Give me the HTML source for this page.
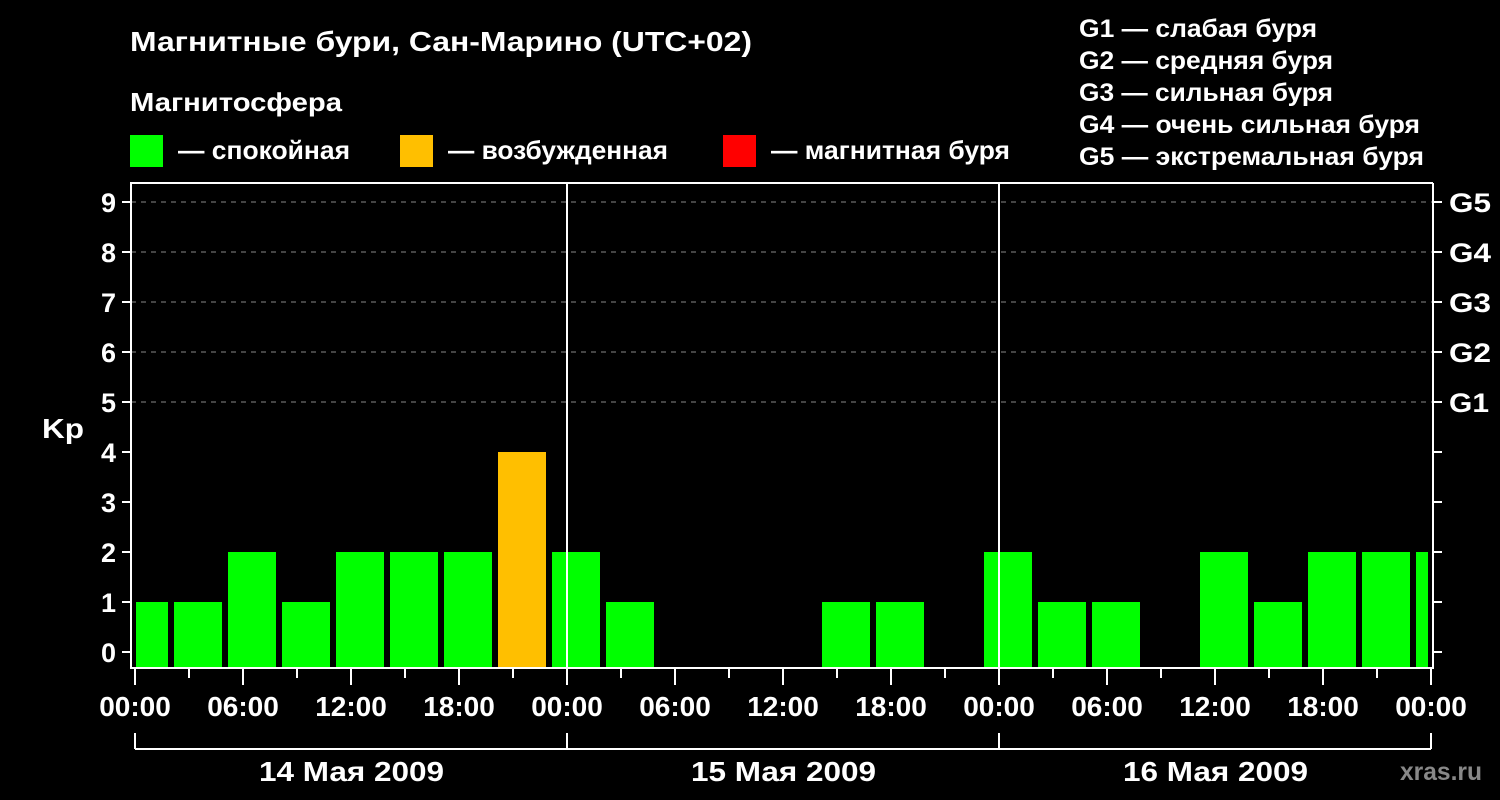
<!DOCTYPE html>
<html><head><meta charset="utf-8"><style>
html,body{margin:0;padding:0;background:#000;width:1500px;height:800px;overflow:hidden}
svg{display:block}
text{font-family:"Liberation Sans",sans-serif;font-weight:bold;fill:#fff}
</style></head><body>
<svg width="1500" height="800" viewBox="0 0 1500 800" xmlns="http://www.w3.org/2000/svg">
<text x="130" y="51" font-size="28" textLength="622" lengthAdjust="spacingAndGlyphs">Магнитные бури, Сан-Марино (UTC+02)</text>
<text x="130" y="111" font-size="26" textLength="212" lengthAdjust="spacingAndGlyphs">Магнитосфера</text>
<rect x="130" y="135" width="33" height="32" fill="#00ff00"/>
<text x="178" y="159" font-size="26" textLength="172" lengthAdjust="spacingAndGlyphs">— спокойная</text>
<rect x="400" y="135" width="33" height="32" fill="#ffbf00"/>
<text x="448" y="159" font-size="26" textLength="220" lengthAdjust="spacingAndGlyphs">— возбужденная</text>
<rect x="723" y="135" width="33" height="32" fill="#ff0000"/>
<text x="771" y="159" font-size="26" textLength="239" lengthAdjust="spacingAndGlyphs">— магнитная буря</text>
<g font-size="25" lengthAdjust="spacingAndGlyphs">
<text x="1079" y="37" textLength="238" lengthAdjust="spacingAndGlyphs">G1 — слабая буря</text>
<text x="1079" y="69" textLength="254" lengthAdjust="spacingAndGlyphs">G2 — средняя буря</text>
<text x="1079" y="101" textLength="254" lengthAdjust="spacingAndGlyphs">G3 — сильная буря</text>
<text x="1079" y="133" textLength="341" lengthAdjust="spacingAndGlyphs">G4 — очень сильная буря</text>
<text x="1079" y="165" textLength="345" lengthAdjust="spacingAndGlyphs">G5 — экстремальная буря</text>
</g>
<g stroke="#888" stroke-width="1" stroke-dasharray="5,5">
<line x1="131" y1="202" x2="1433" y2="202"/>
<line x1="131" y1="252" x2="1433" y2="252"/>
<line x1="131" y1="302" x2="1433" y2="302"/>
<line x1="131" y1="352" x2="1433" y2="352"/>
<line x1="131" y1="402" x2="1433" y2="402"/>
</g>
<g fill="#00ff00">
<rect x="136" y="602" width="32" height="66"/>
<rect x="174" y="602" width="48" height="66"/>
<rect x="228" y="552" width="48" height="116"/>
<rect x="282" y="602" width="48" height="66"/>
<rect x="336" y="552" width="48" height="116"/>
<rect x="390" y="552" width="48" height="116"/>
<rect x="444" y="552" width="48" height="116"/>
<rect x="552" y="552" width="48" height="116"/>
<rect x="606" y="602" width="48" height="66"/>
<rect x="822" y="602" width="48" height="66"/>
<rect x="876" y="602" width="48" height="66"/>
<rect x="984" y="552" width="48" height="116"/>
<rect x="1038" y="602" width="48" height="66"/>
<rect x="1092" y="602" width="48" height="66"/>
<rect x="1200" y="552" width="48" height="116"/>
<rect x="1254" y="602" width="48" height="66"/>
<rect x="1308" y="552" width="48" height="116"/>
<rect x="1362" y="552" width="48" height="116"/>
<rect x="1416" y="552" width="12" height="116"/>
</g>
<rect x="498" y="452" width="48" height="216" fill="#ffbf00"/>
<g stroke="#fff" stroke-width="2" fill="none">
<polyline points="1433,183 131,183 131,668 1433,668 1433,183"/>
<line x1="567" y1="183" x2="567" y2="668"/>
<line x1="999" y1="183" x2="999" y2="668"/>
<line x1="135" y1="749" x2="1431" y2="749"/>
<line x1="135" y1="733" x2="135" y2="749"/>
<line x1="567" y1="733" x2="567" y2="749"/>
<line x1="999" y1="733" x2="999" y2="749"/>
<line x1="1431" y1="733" x2="1431" y2="749"/>
</g>
<g stroke="#fff" stroke-width="2">
<line x1="122" y1="652" x2="131" y2="652"/><line x1="122" y1="602" x2="131" y2="602"/>
<line x1="122" y1="552" x2="131" y2="552"/><line x1="122" y1="502" x2="131" y2="502"/>
<line x1="122" y1="452" x2="131" y2="452"/><line x1="122" y1="402" x2="131" y2="402"/>
<line x1="122" y1="352" x2="131" y2="352"/><line x1="122" y1="302" x2="131" y2="302"/>
<line x1="122" y1="252" x2="131" y2="252"/><line x1="122" y1="202" x2="131" y2="202"/>
<line x1="1433" y1="652" x2="1442" y2="652"/><line x1="1433" y1="602" x2="1442" y2="602"/>
<line x1="1433" y1="552" x2="1442" y2="552"/><line x1="1433" y1="502" x2="1442" y2="502"/>
<line x1="1433" y1="452" x2="1442" y2="452"/><line x1="1433" y1="402" x2="1442" y2="402"/>
<line x1="1433" y1="352" x2="1442" y2="352"/><line x1="1433" y1="302" x2="1442" y2="302"/>
<line x1="1433" y1="252" x2="1442" y2="252"/><line x1="1433" y1="202" x2="1442" y2="202"/>
<line x1="135" y1="668" x2="135" y2="685"/><line x1="189" y1="668" x2="189" y2="678"/>
<line x1="243" y1="668" x2="243" y2="685"/><line x1="297" y1="668" x2="297" y2="678"/>
<line x1="351" y1="668" x2="351" y2="685"/><line x1="405" y1="668" x2="405" y2="678"/>
<line x1="459" y1="668" x2="459" y2="685"/><line x1="513" y1="668" x2="513" y2="678"/>
<line x1="567" y1="668" x2="567" y2="685"/><line x1="621" y1="668" x2="621" y2="678"/>
<line x1="675" y1="668" x2="675" y2="685"/><line x1="729" y1="668" x2="729" y2="678"/>
<line x1="783" y1="668" x2="783" y2="685"/><line x1="837" y1="668" x2="837" y2="678"/>
<line x1="891" y1="668" x2="891" y2="685"/><line x1="945" y1="668" x2="945" y2="678"/>
<line x1="999" y1="668" x2="999" y2="685"/><line x1="1053" y1="668" x2="1053" y2="678"/>
<line x1="1107" y1="668" x2="1107" y2="685"/><line x1="1161" y1="668" x2="1161" y2="678"/>
<line x1="1215" y1="668" x2="1215" y2="685"/><line x1="1269" y1="668" x2="1269" y2="678"/>
<line x1="1323" y1="668" x2="1323" y2="685"/><line x1="1377" y1="668" x2="1377" y2="678"/>
<line x1="1431" y1="668" x2="1431" y2="685"/>
</g>
<g font-size="27" text-anchor="end">
<text x="116" y="662">0</text><text x="116" y="612">1</text><text x="116" y="562">2</text>
<text x="116" y="512">3</text><text x="116" y="462">4</text><text x="116" y="412">5</text>
<text x="116" y="362">6</text><text x="116" y="312">7</text><text x="116" y="262">8</text>
<text x="116" y="212">9</text>
</g>
<text x="42" y="438" font-size="28" textLength="42" lengthAdjust="spacingAndGlyphs">Kp</text>
<g font-size="27">
<text x="1449" y="412" textLength="40" lengthAdjust="spacingAndGlyphs">G1</text><text x="1449" y="362" textLength="42" lengthAdjust="spacingAndGlyphs">G2</text><text x="1449" y="312" textLength="42" lengthAdjust="spacingAndGlyphs">G3</text>
<text x="1449" y="262" textLength="42" lengthAdjust="spacingAndGlyphs">G4</text><text x="1449" y="212" textLength="42" lengthAdjust="spacingAndGlyphs">G5</text>
</g>
<g font-size="28" text-anchor="middle">
<text x="135" y="716">00:00</text><text x="243" y="716">06:00</text><text x="351" y="716">12:00</text>
<text x="459" y="716">18:00</text><text x="567" y="716">00:00</text><text x="675" y="716">06:00</text>
<text x="783" y="716">12:00</text><text x="891" y="716">18:00</text><text x="999" y="716">00:00</text>
<text x="1107" y="716">06:00</text><text x="1215" y="716">12:00</text><text x="1323" y="716">18:00</text>
<text x="1431" y="716">00:00</text>
</g>
<g font-size="28">
<text x="259" y="781" textLength="185" lengthAdjust="spacingAndGlyphs">14 Мая 2009</text>
<text x="691" y="781" textLength="185" lengthAdjust="spacingAndGlyphs">15 Мая 2009</text>
<text x="1123" y="781" textLength="185" lengthAdjust="spacingAndGlyphs">16 Мая 2009</text>
</g>
<text x="1400" y="780" font-size="25" style="fill:#888" textLength="82" lengthAdjust="spacingAndGlyphs">xras.ru</text>
</svg>
</body></html>
